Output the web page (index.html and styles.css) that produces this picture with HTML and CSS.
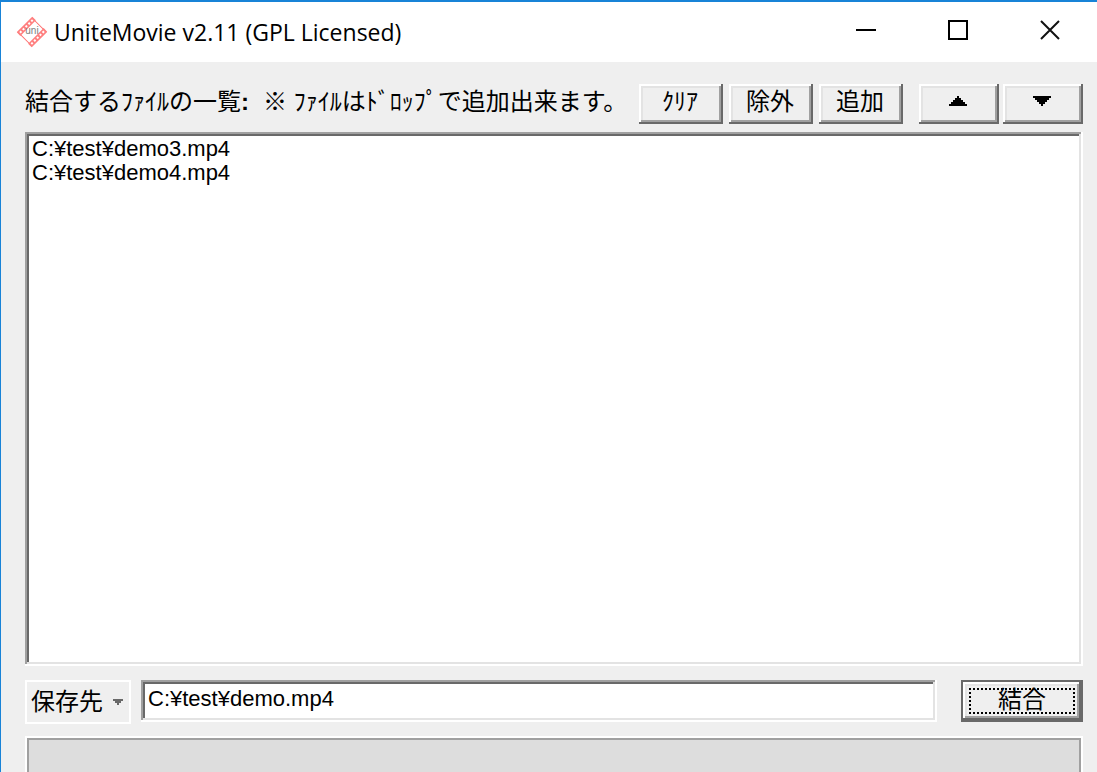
FILE: index.html
```
<!DOCTYPE html>
<html lang="ja">
<head>
  <meta charset="UTF-8">
  <meta name="viewport" content="width=device-width, initial-scale=1">
  <title>UniteMovie v2.11 (GPL Licensed)</title>
  <link rel="stylesheet" href="styles.css">
</head>

<body>

  <header class="title-bar">
    <svg class="app-icon" viewBox="0 0 32 32" aria-hidden="true">
      <g transform="rotate(-45 16 16)">
        <rect x="6" y="6" width="20" height="20" fill="#fff" stroke="#ff7070" stroke-width="1"/>
        <path d="M5 8h22M5 24h22" stroke="#ff7f7f" stroke-width="5"/>
        <path d="M7 8h20M7 24h20" stroke="#fff" stroke-width="2" stroke-dasharray="2 2"/>
      </g>
      <text class="app-icon-text" x="16" y="18" text-anchor="middle">uni</text>
    </svg>
    <h1 class="title">UniteMovie v2.11 (GPL Licensed)</h1>
    <div class="window-buttons">
      <button class="window-button" type="button" aria-label="最小化">
        <svg width="20" height="20" viewBox="0 0 20 20"><path d="M0 10h20" stroke="#000" stroke-width="2"/></svg>
      </button>
      <button class="window-button" type="button" aria-label="最大化">
        <svg width="20" height="20" viewBox="0 0 20 20"><rect x="1" y="1" width="18" height="18" fill="none" stroke="#000" stroke-width="2"/></svg>
      </button>
      <button class="window-button" type="button" aria-label="閉じる">
        <svg width="20" height="20" viewBox="0 0 20 20"><path d="M1 1l18 18M19 1L1 19" stroke="#111" stroke-width="2"/></svg>
      </button>
    </div>
  </header>

  <main class="content">
    <div class="toolbar">
      <label class="list-label" for="file-list">
        <span>結合するﾌｧｲﾙの一覧<b>:</b></span>
        <span>※ ﾌｧｲﾙはﾄﾞﾛｯﾌﾟで追加出来ます。</span>
      </label>
      <div class="button-group">
        <button class="button" type="button">ｸﾘｱ</button>
        <button class="button" type="button">除外</button>
        <button class="button" type="button">追加</button>
      </div>
      <div class="move-group">
        <button class="button move-button" type="button" aria-label="上へ">
          <svg width="18" height="10" viewBox="0 0 18 10" shape-rendering="crispEdges"><path d="M8 0h2v2h2v2h2v2h2v2h2v2H0V8h2V6h2V4h2V2h2z"/></svg>
        </button>
        <button class="button move-button" type="button" aria-label="下へ">
          <svg width="18" height="10" viewBox="0 0 18 10" shape-rendering="crispEdges"><path d="M0 0h18v2h-2v2h-2v2h-2v2h-2v2H8V8H6V6H4V4H2V2H0z"/></svg>
        </button>
      </div>
    </div>

    <select class="file-list" id="file-list" size="2" multiple>
      <option>C:¥test¥demo3.mp4</option>
      <option>C:¥test¥demo4.mp4</option>
    </select>

    <div class="output-row">
      <button class="save-button" id="save-button" type="button" aria-haspopup="menu">
        <span>保存先</span>
        <svg width="10" height="6" viewBox="0 0 10 6" shape-rendering="crispEdges"><path d="M0 0h10v2H8v2H6v2H4V4H2V2H0z" fill="#696969"/></svg>
      </button>
      <input class="output-path" type="text" value="C:¥test¥demo.mp4" aria-labelledby="save-button">
      <button class="unite-button" type="button"><span class="focus-rect">結合</span></button>
    </div>

    <progress class="progress" value="0" max="100" aria-label="進行状況"></progress>
  </main>

</body>
</html>
```
FILE: styles.css
```
* {
  box-sizing: border-box;
}

body {
  margin: 0;
  height: 100vh;
  overflow: hidden;
  display: flex;
  flex-direction: column;
  background: #efefef;
  border-top: 2px solid #1883d7;
  border-left: 1px solid #1883d7;
  color: #000;
  font-family: "Liberation Sans", "Noto Sans CJK JP", sans-serif;
  font-size: 24px;
  line-height: 24px;
}

button,
input,
select {
  margin: 0;
  border: none;
  border-radius: 0;
  color: inherit;
  font: inherit;
}

svg {
  display: block;
}

/* title bar */
.title-bar {
  display: flex;
  align-items: center;
  height: 60px;
  padding-left: 15px;
  background: #fff;
}

.app-icon {
  width: 32px;
  height: 32px;
}

.app-icon-text {
  fill: #808080;
  font-family: "Liberation Sans", sans-serif;
  font-size: 10px;
}

.title {
  flex: 1;
  margin: 0 0 0 6px;
  font-family: "Open Sans", "Noto Sans", sans-serif;
  font-size: 23px;
  font-weight: 400;
  white-space: nowrap;
}

.window-buttons {
  display: flex;
  align-self: flex-start;
  margin-right: 1px;
}

.window-button {
  display: flex;
  align-items: center;
  justify-content: center;
  width: 92px;
  height: 56px;
  padding: 0;
  background: none;
}

/* main area */
.content {
  flex: 1;
  display: flex;
  flex-direction: column;
  min-height: 0;
  padding: 22px 14px 0 24px;
}

.toolbar {
  display: flex;
  margin-bottom: 8px;
}

.list-label {
  flex: 1;
  display: flex;
  gap: 14px;
  padding-top: 6px;
  white-space: nowrap;
}

.button-group {
  display: flex;
  gap: 6px;
}

.move-group {
  display: flex;
  gap: 4px;
  margin-left: 16px;
}

/* raised 3D edge */
.button {
  display: flex;
  align-items: center;
  justify-content: center;
  width: 84px;
  height: 40px;
  padding: 0 6px 4px 4px;
  background: #efefef;
  box-shadow: inset -2px -2px #696969, inset 2px 2px #fff,
    inset -4px -4px #a0a0a0, inset 4px 4px #e3e3e3;
}

.move-button {
  width: 80px;
  padding-bottom: 6px;
}

/* sunken 3D edge */
.file-list,
.output-path {
  background: #fff;
  box-shadow: inset -2px -2px #fff, inset 2px 2px #a0a0a0,
    inset -4px -4px #e3e3e3, inset 4px 4px #696969;
  font-size: 22px;
}

.file-list {
  flex: 1;
  width: 100%;
  min-height: 0;
  padding: 4px;
  outline: none;
  overflow: hidden;
}

.file-list option {
  height: 24px;
  min-height: 0;
  padding: 0 3px;
  line-height: 24px;
}

.output-row {
  display: flex;
  align-items: flex-start;
  margin: 14px 0 12px;
}

.save-button {
  display: flex;
  align-items: center;
  gap: 10px;
  height: 44px;
  padding: 0 6px 0 4px;
  background: none;
  border: 2px solid #fff;
}

.output-path {
  flex: 1;
  min-width: 0;
  height: 42px;
  margin: 0 24px 0 10px;
  padding: 4px 7px 8px;
}

.unite-button {
  width: 122px;
  height: 42px;
  padding: 6px;
  background: #efefef;
  border: 2px solid #696969;
  box-shadow: inset -2px -2px #696969, inset 2px 2px #fff,
    inset -4px -4px #a0a0a0, inset 4px 4px #e3e3e3;
}

.focus-rect {
  display: block;
  height: 26px;
  border: 2px dotted #000;
  line-height: 20px;
}

.progress {
  display: block;
  width: 100%;
  height: 36px;
  appearance: none;
  background: #ddd;
  border: 2px solid #fff;
  border-bottom: none;
  box-shadow: inset 2px 2px #a0a0a0, inset -2px 0 #a0a0a0;
}

.progress::-webkit-progress-bar {
  background: transparent;
}
```
